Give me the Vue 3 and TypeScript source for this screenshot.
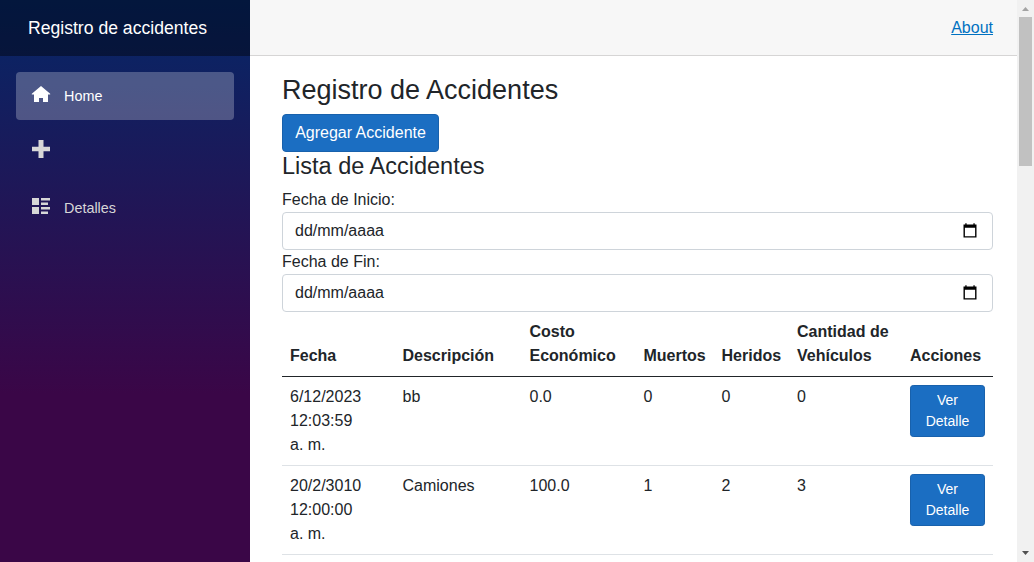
<script setup lang="ts">
interface Accident {
  date: string[]
  description: string
  cost: string
  deaths: number
  injured: number
  vehicles: number
}

const filters: string[] = ['Fecha de Inicio:', 'Fecha de Fin:']
const accidents: Accident[] = [
  { date: ['6/12/2023', '12:03:59', 'a. m.'], description: 'bb', cost: '0.0', deaths: 0, injured: 0, vehicles: 0 },
  { date: ['20/2/3010', '12:00:00', 'a. m.'], description: 'Camiones', cost: '100.0', deaths: 1, injured: 2, vehicles: 3 },
]
</script>

<template>
  <div class="page">
    <aside class="sidebar">
      <div class="brand-row"><a class="brand">Registro de accidentes</a></div>
      <nav class="nav">
        <a class="nav-link active">
          <svg class="icon" viewBox="0 0 20 20">
            <path d="M10 1 L0.8 8.8 V9.4 H3 V17 H8 V13 H12 V17 H17 V9.4 H19.2 V8.8 Z" />
          </svg>
          <span>Home</span>
        </a>
        <a class="nav-link">
          <svg class="icon plus" viewBox="0 0 20 20"><path d="M7.5 0H12.5V6.7H19V11.2H12.5V18H7.5V11.2H1V6.7H7.5Z" /></svg>
        </a>
        <a class="nav-link">
          <svg class="icon" viewBox="0 0 20 20">
            <path d="M1 1H8V8H1ZM1 10H8V17H1ZM10 1H19V3.6H10ZM10 5.6H17V8H10ZM10 10H19V12.6H10ZM10 14.6H17V17H10Z" />
          </svg>
          <span>Detalles</span>
        </a>
      </nav>
    </aside>

    <main class="main">
      <header class="top-row"><a class="about">About</a></header>
      <article class="content">
        <h3>Registro de Accidentes</h3>
        <button class="btn add">Agregar Accidente</button>
        <h4>Lista de Accidentes</h4>
        <div v-for="label in filters" :key="label" class="field">
          <label>{{ label }}</label>
          <div class="date-input">
            <span>dd/mm/aaaa</span>
            <svg class="calendar" viewBox="0 0 14 15">
              <path d="M2.3 0.2H3.6V1.5H10.4V0.2H11.7V1.5H13.5V14.5H0.5V1.5H2.3ZM1.9 4.8V13.2H12.1V4.8Z" fill-rule="evenodd" />
            </svg>
          </div>
        </div>
        <table class="table">
          <colgroup>
            <col class="c-date"><col class="c-desc"><col class="c-cost"><col class="c-dead">
            <col class="c-hurt"><col class="c-veh"><col class="c-act">
          </colgroup>
          <thead>
            <tr>
              <th>Fecha</th>
              <th>Descripción</th>
              <th>Costo Económico</th>
              <th>Muertos</th>
              <th>Heridos</th>
              <th>Cantidad de Vehículos</th>
              <th>Acciones</th>
            </tr>
          </thead>
          <tbody>
            <tr v-for="row in accidents" :key="row.description">
              <td><div v-for="part in row.date" :key="part">{{ part }}</div></td>
              <td>{{ row.description }}</td>
              <td>{{ row.cost }}</td>
              <td>{{ row.deaths }}</td>
              <td>{{ row.injured }}</td>
              <td>{{ row.vehicles }}</td>
              <td><button class="btn small">Ver Detalle</button></td>
            </tr>
          </tbody>
        </table>
      </article>
    </main>

    <div class="scrollbar">
      <svg class="arrow up" viewBox="0 0 17 17"><path d="M5 11L8.5 7L12 11Z" /></svg>
      <div class="thumb"></div>
      <svg class="arrow down" viewBox="0 0 17 17"><path d="M5 6L8.5 10L12 6Z" /></svg>
    </div>
  </div>
</template>

<style>
body { margin: 0; overflow: hidden; }
</style>

<style scoped>
* { box-sizing: border-box; }
.page {
  display: flex;
  height: 562px;
  overflow: hidden;
  background: #fff;
  color: #212529;
  font: 16px/24px "Liberation Sans", Arial, sans-serif;
}
.sidebar {
  width: 250px;
  flex: none;
  background: linear-gradient(180deg, rgb(5, 39, 103) 0%, #3a0647 70%);
}
.brand-row {
  height: 56px;
  padding-left: 28px;
  display: flex;
  align-items: center;
  background: rgba(0, 0, 0, 0.4);
}
.brand { color: #fff; font-size: 17.6px; white-space: nowrap; }
.nav { display: flex; flex-direction: column; gap: 8px; padding: 16px; }
.nav-link {
  height: 48px;
  display: flex;
  padding-left: 15px;
  border-radius: 4px;
  color: #d7d7d7;
  font-size: 14.4px;
  line-height: 48px;
}
.nav-link.active { background: rgba(255, 255, 255, 0.25); color: #fff; }
.icon { width: 20px; height: 20px; margin: 13px 13px 0 0; fill: currentColor; flex: none; }
.icon.plus { margin-top: 12px; }
.main { width: 767px; flex: none; }
.top-row {
  height: 56px;
  padding-right: 24px;
  display: flex;
  align-items: center;
  justify-content: flex-end;
  background: #f7f7f7;
  border-bottom: 1px solid #d6d5d5;
}
.about { color: #0071c1; text-decoration: underline; }
.content { padding: 18px 24px 0 32px; }
h3, h4 { margin: 0; font-weight: 500; white-space: nowrap; }
h3 { margin-bottom: 6px; font-size: 27px; line-height: 33.6px; }
h4 { margin-bottom: 8px; font-size: 23.5px; line-height: 28.8px; }
.btn {
  display: block;
  color: #fff;
  background: #1b6ec2;
  border: 1px solid #1861ac;
  border-radius: 4px;
  font-family: inherit;
  text-align: center;
}
.add { width: 157px; height: 38px; padding: 6px 0; font-size: 16px; line-height: 24px; white-space: nowrap; }
.small { width: 75px; padding: 4px 8px; font-size: 14px; line-height: 21px; border-radius: 3.2px; }
.field label { display: block; }
.date-input {
  height: 38px;
  padding: 0 15px 0 12px;
  display: flex;
  align-items: center;
  justify-content: space-between;
  border: 1px solid #ced4da;
  border-radius: 4px;
}
.calendar { width: 14px; height: 15px; margin-top: -1px; fill: #000; }
.table { width: 711px; table-layout: fixed; border-collapse: collapse; }
.table th, .table td { padding: 8px; text-align: left; vertical-align: top; border-bottom: 1px solid #dee2e6; }
.table th { vertical-align: bottom; border-bottom-color: #212529; }
.c-date { width: 112.5px; }
.c-desc { width: 127px; }
.c-cost { width: 114px; }
.c-dead { width: 78px; }
.c-hurt { width: 75.5px; }
.c-veh { width: 113px; }
.c-act { width: 91px; }
.scrollbar {
  width: 17px;
  flex: none;
  display: flex;
  flex-direction: column;
  align-items: center;
  background: #f1f1f1;
}
.arrow { width: 17px; height: 17px; flex: none; }
.up { fill: #a3a3a3; }
.down { fill: #505050; margin-top: auto; }
.thumb { width: 13px; height: 149px; background: #c1c1c1; }
</style>
